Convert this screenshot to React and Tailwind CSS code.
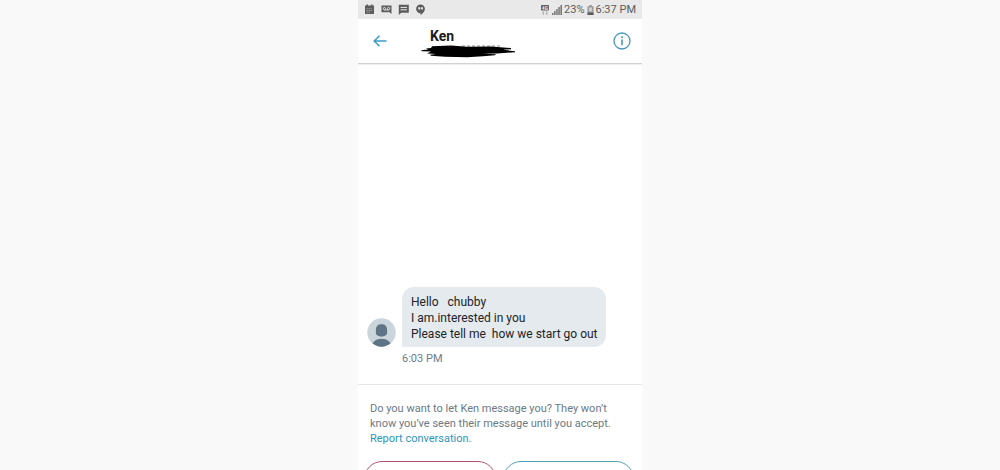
function StatusBar() {
  return (
    <div className="flex h-[19px] items-center justify-between bg-[#e9e9e9] px-[6px] text-[#5c5c5c]">
      <div className="flex items-center gap-[6px]">
        {/* calendar */}
        <svg className="size-[11px]" viewBox="0 0 11 11" fill="currentColor" aria-hidden="true">
          <path d="M1 1.5h1.5V.5h1.5v1h3v-1h1.5v1H10V10H1z" />
          <path d="M2.5 4.7h6M2.5 6.5h6M2.5 8.3h4" stroke="#bdbdbd" strokeWidth=".8" strokeDasharray="1.2 .8" />
        </svg>
        {/* voicemail */}
        <svg className="size-[11px]" viewBox="0 0 11 11" fill="currentColor" aria-hidden="true">
          <path d="M.5 1.5h10v8.500L8.600 8.200H.5z" />
          <g fill="none" stroke="#e9e9e9" strokeWidth=".9">
            <circle cx="3.4" cy="4.6" r="1.2" />
            <circle cx="7.6" cy="4.6" r="1.2" />
            <path d="M3.4 6h4.2" />
          </g>
        </svg>
        {/* message */}
        <svg className="size-[11px]" viewBox="0 0 11 11" fill="currentColor" aria-hidden="true">
          <path d="M.8 .8h10V8.700H3.200L.8 10.900z" />
          <path d="M2.5 3.4H9M2.5 5.800H9" stroke="#e9e9e9" strokeWidth="1" />
        </svg>
        {/* hangouts */}
        <svg className="size-[11px]" viewBox="0 0 11 11" fill="currentColor" aria-hidden="true">
          <path d="M5.5.4a4.4 4.4 0 0 1 4.4 4.4c0 2.600-2 4.900-4.400 6.100V9.200a4.400 4.400 0 0 1 0-8.800z" />
          <path d="M3.200 3.300h2v1.900l-.8 1v-1h-1.200zM5.900 3.300h2v1.900l-.8 1v-1H5.900z" fill="#e9e9e9" />
        </svg>
      </div>
      <div className="flex items-center text-[11px] leading-4">
        <svg className="mr-[3px] h-[10px] w-[8px]" viewBox="0 0 8 10" aria-hidden="true">
          <rect width="8" height="5.500" rx=".8" fill="#5c5c5c" />
          <text x="4" y="4.600" textAnchor="middle" className="text-[5px] font-bold" fill="#e9e9e9">4G</text>
          <path d="M2.200 6.300l1.300 1.500h-.8V10h-1V7.800H.9zM5.800 10L4.500 8.500h.8V6.300h1v2.200h.8z" fill="#a8a8a8" />
        </svg>
        <svg className="mr-[2px] h-[10px] w-[10px]" viewBox="0 0 10 10" fill="#777" aria-hidden="true">
          <path d="M0 8h1.5v2H0zM2.1 6h1.5v4H2.1zM4.2 4h1.5v6H4.2zM6.3 2h1.5v8H6.3zM8.4 0H10v10H8.4z" />
        </svg>
        <span>23%</span>
        <svg className="mx-[2px] h-[10px] w-[7px]" viewBox="0 0 7 10" aria-hidden="true">
          <path d="M2.2 0h2.6v1.2h1.7V10H.5V1.2h1.7z" fill="#9a9a9a" />
          <path d="M2 2.5h3v4H2z" fill="#d0d0d0" />
          <path d="M.5 7.5h6V10h-6z" fill="#5c5c5c" />
        </svg>
        <span>6:37 PM</span>
      </div>
    </div>
  );
}

function Header() {
  return (
    <header className="flex h-[45px] items-center border-b border-[#d2d2d2] pr-[11px] pl-[15px] shadow-[0_1px_0_#eeeeee]">
      <button type="button" aria-label="Back" className="text-[#3a9bcb]">
        <svg className="h-[12px] w-[14px]" viewBox="0 0 14 12" fill="none" stroke="currentColor" strokeWidth="1.5" aria-hidden="true">
          <path d="M6.5.7L1.2 6l5.3 5.3M1.2 6h12.3" />
        </svg>
      </button>
      <div className="ml-[34px] flex-1 pt-[3px]">
        <h1 className="pl-[9px] text-[14px] leading-4 font-bold text-[#1b1b1b]">Ken</h1>
        {/* scribbled-out handle */}
        <svg className="h-[14px] w-[95px]" viewBox="0 0 95 14" aria-hidden="true">
          <path d="M41 2h40" stroke="#8b9094" strokeWidth="1.200" strokeDasharray="3 2" />
          <path d="M0 6.200L7 5.600 5 4.500 10 4 11 2.200 30 1.600 46 2.800 70 2.600 90 4 90 5.300 82 5.800 94 7.200 94 8.200 76 9.400 62 9.800 75 10.200 74 11.200 62 12.300 46 13.200 24 12.800 10 11.800 9 10.800 15 10 6 9.600 10 7.500 1 7.200z" fill="#000" />
        </svg>
      </div>
      <button type="button" aria-label="Conversation info" className="text-[#4497bd]">
        <svg className="size-[18px]" viewBox="0 0 18 18" fill="none" stroke="currentColor" strokeWidth="1.3" aria-hidden="true">
          <circle cx="9" cy="9" r="8" />
          <path d="M9 7.600v5.600" strokeWidth="1.600" />
          <circle cx="9" cy="5.300" r="1" fill="currentColor" stroke="none" />
        </svg>
      </button>
    </header>
  );
}

function Message() {
  return (
    <div className="flex items-end gap-[6px] pl-[9px]">
      <svg className="size-[29px] shrink-0" viewBox="0 0 29 29" role="img" aria-label="Ken">
        <clipPath id="avatar">
          <circle cx="14.5" cy="14.5" r="14.2" />
        </clipPath>
        <g clipPath="url(#avatar)">
          <path d="M0 0h29v29H0z" fill="#cbd5dc" />
          <path d="M14.5 6.200c3.800 0 5.600 2 5.600 5.600v3.400c0 1.700-2.700 3.300-5.600 3.300s-5.600-1.600-5.600-3.300v-3.400c0-3.600 1.800-5.600 5.600-5.600z" fill="#5f7585" />
          <path d="M4 29c1-5 5-8.200 10.500-8.200S24 24 25 29z" fill="#5f7585" />
        </g>
      </svg>
      <p className="rounded-xl rounded-bl-none bg-[#e5eaee] pt-[7px] pr-[8px] pb-[5px] pl-[9px] text-[12px] leading-4 whitespace-pre text-[#202427]">
        {"Hello   chubby\nI am.interested in you\nPlease tell me  how we start go out"}
      </p>
    </div>
  );
}

export default function App() {
  return (
    <div className="flex h-screen justify-center overflow-hidden bg-[#f9f9f9] font-['Roboto',sans-serif]">
      <div className="flex w-full max-w-[284px] flex-col self-start bg-white">
        <StatusBar />
        <Header />
        <main className="pt-[223px] pb-[17px]">
          <Message />
          <time className="mt-[4px] ml-[44px] block text-[11px] leading-4 text-[#6c7d89]">6:03 PM</time>
        </main>
        <section className="border-t border-[#e6e6e6] pt-[16px] pr-[8px] pb-4 pl-[6px]">
          <p className="px-[6px] text-[11px] leading-[15px] text-[#6b7a86]">
            Do you want to let Ken message you? They won’t know you’ve seen their message until you accept.{" "}
            <a href="#report" className="block text-[#2d95c0]">Report conversation.</a>
          </p>
          <div className="mt-[15px] grid grid-cols-2 gap-[7px]">
            <button type="button" aria-label="Delete" className="h-9 rounded-full border border-[#b0526f]" />
            <button type="button" aria-label="Accept" className="h-9 rounded-full border border-[#4f9fb5]" />
          </div>
        </section>
      </div>
    </div>
  );
}
